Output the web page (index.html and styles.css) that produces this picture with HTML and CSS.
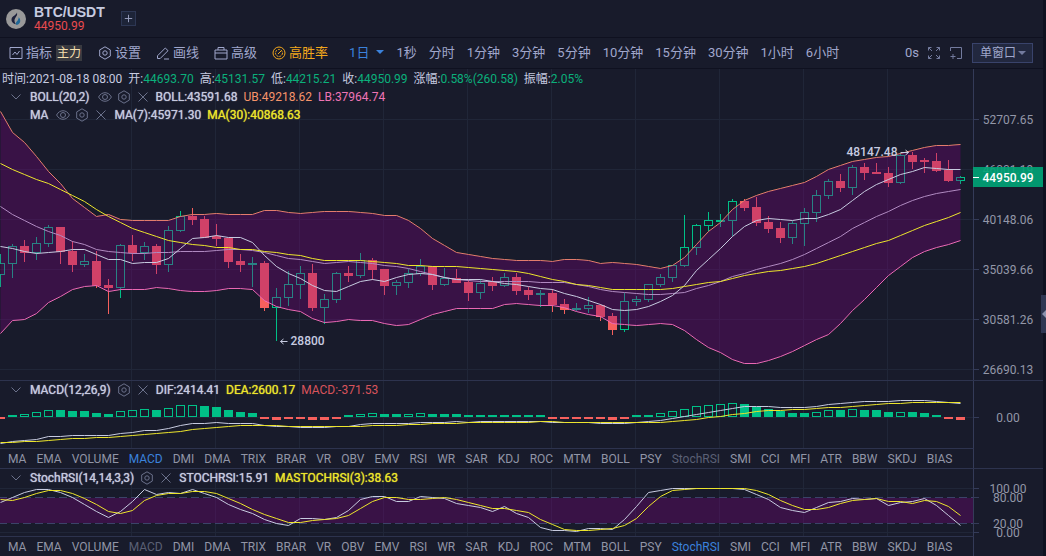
FILE: index.html
```html
<!DOCTYPE html>
<html lang="zh-CN">
<head>
    <meta charset="UTF-8" />
    <meta name="viewport" content="width=device-width, initial-scale=1" />
    <title>BTC/USDT 44950.99</title>
    <link rel="stylesheet" href="styles.css">
</head>
<body>
    <svg class="defs" width="0" height="0" aria-hidden="true">
        <symbol id="i-hex" viewBox="0 0 14 14">
            <path d="M7 .8l5.300 3.100v6.200L7 13.200l-5.300-3.100V3.900z" />
            <circle cx="7" cy="7" r="2.200" />
        </symbol>
        <symbol id="i-eye" viewBox="0 0 14 14">
            <path d="M.6 7C3.500 1.300 10.500 1.300 13.400 7 10.500 12.700 3.500 12.700.6 7z" />
            <circle cx="7" cy="7" r="2.500" />
        </symbol>
        <symbol id="i-close" viewBox="0 0 14 14"><path d="M2.500 2.500l9 9M11.500 2.500l-9 9" /></symbol>
        <symbol id="i-down" viewBox="0 0 14 14"><path d="M2.500 4.500l4.500 4.500 4.500-4.500" /></symbol>
    </svg>

    <div class="app">
        <header class="header">
            <svg class="logo" viewBox="0 0 20 20">
                <circle cx="10" cy="10" r="10" fill="#999" />
                <path d="M11 3.500c.5 2.500-.4 3.700-1.600 5.200-1.300 1.700-1.300 4.300.5 6.500-3-.5-4.800-2.700-4.300-5.500C6.200 6.900 10 6.500 11 3.500z" fill="#1b1f3a" />
                <path d="M12.600 8.200c2.300 1.900 2.800 6.300-2.100 7.900-1.500-2.300.4-3.500 1.300-4.800.7-1 .9-2 .8-3.100z" fill="#1f6796" />
            </svg>
            <div class="pair">
                <h1>BTC/USDT</h1>
                <span class="last">44950.99</span>
            </div>
            <button type="button" class="add" aria-label="添加"><svg viewBox="0 0 14 14"><path d="M7 3v8M3 7h8" /></svg></button>
        </header>

        <nav class="toolbar">
            <div class="tools">
                <button type="button" class="tool">
                    <svg viewBox="0 0 14 14"><path d="M1 1.500h12v11H1zM3.500 9l2.500-3 2 2.500L10.500 5" /></svg>指标 <span class="badge">主力</span>
                </button>
                <button type="button" class="tool"><svg viewBox="0 0 14 14"><use href="#i-hex" /></svg>设置</button>
                <button type="button" class="tool"><svg viewBox="0 0 14 14"><path d="M1.500 12.500V9.800L9.300 2l2.700 2.700-7.800 7.800zM8 13h5" /></svg>画线</button>
                <button type="button" class="tool"><svg viewBox="0 0 14 14"><path d="M1 4h12v9H1zM1 7h12M4 4V1.500h6V4" /></svg>高级</button>
                <button type="button" class="tool gold">
                    <svg viewBox="0 0 14 14"><circle cx="7" cy="7" r="6" /><circle cx="7" cy="7" r="3.500" stroke-dasharray="2 1" /><path d="M6 8l3.500-3.500" /></svg>高胜率
                </button>
            </div>
            <div class="intervals">
                <button type="button" class="on">1日<i class="caret"></i></button>
                <button type="button">1秒</button>
                <button type="button">分时</button>
                <button type="button">1分钟</button>
                <button type="button">3分钟</button>
                <button type="button">5分钟</button>
                <button type="button">10分钟</button>
                <button type="button">15分钟</button>
                <button type="button">30分钟</button>
                <button type="button">1小时</button>
                <button type="button">6小时</button>
            </div>
            <div class="right">
                <span class="delay">0s</span>
                <button type="button" aria-label="全屏"><svg viewBox="0 0 14 14"><path d="M1.500 4.500v-3h3M9.500 1.500h3v3M12.500 9.500v3h-3M4.500 12.500h-3v-3M1.500 1.500l3.500 3.500M12.500 1.500L9 5M12.500 12.500L9 9M1.500 12.500L5 9" /></svg></button>
                <button type="button" aria-label="添加窗口"><svg viewBox="0 0 14 14"><path d="M1.500 5V1.500h11v11H8M4 8v5M1.500 10.500h5" /></svg></button>
                <label class="layout">
                    <select aria-label="窗口布局"><option>单窗口</option><option>双窗口</option></select>
                    <i class="caret"></i>
                </label>
            </div>
        </nav>

        <main>
            <section class="panel main-panel">
                <svg class="plot" id="price"></svg>
                <div class="legends">
                    <div class="ohlc">
                        <span>时间:2021-08-18 08:00</span>
                        <span>开:<b>44693.70</b></span>
                        <span>高:<b>45131.57</b></span>
                        <span>低:<b>44215.21</b></span>
                        <span>收:<b>44950.99</b></span>
                        <span>涨幅:<b>0.58%(260.58)</b></span>
                        <span>振幅:<b>2.05%</b></span>
                    </div>
                    <div class="legend">
                        <svg class="fold"><use href="#i-down" /></svg>
                        <span class="strong">BOLL(20,2)</span>
                        <span class="icons wide"><svg><use href="#i-eye" /></svg><svg><use href="#i-hex" /></svg><svg><use href="#i-close" /></svg></span>
                        <span class="strong">BOLL:43591.68</span>
                        <span class="ub">UB:49218.62</span>
                        <span class="lb">LB:37964.74</span>
                    </div>
                    <div class="legend">
                        <span class="fold"></span>
                        <span class="strong">MA</span>
                        <span class="icons wide"><svg><use href="#i-eye" /></svg><svg><use href="#i-hex" /></svg><svg><use href="#i-close" /></svg></span>
                        <span class="strong">MA(7):45971.30</span>
                        <span class="strong yellow">MA(30):40868.63</span>
                    </div>
                </div>
            </section>

            <section class="panel">
                <svg class="plot sub" id="macd"></svg>
                <div class="legends">
                    <div class="legend">
                        <svg class="fold"><use href="#i-down" /></svg>
                        <span class="strong">MACD(12,26,9)</span>
                        <span class="icons"><svg><use href="#i-hex" /></svg><svg><use href="#i-close" /></svg></span>
                        <span class="strong">DIF:2414.41</span>
                        <span class="strong yellow">DEA:2600.17</span>
                        <span class="red">MACD:-371.53</span>
                    </div>
                </div>
            </section>
            <div class="tabs" data-on="MACD" data-off="StochRSI"></div>

            <section class="panel">
                <svg class="plot sub" id="stoch"></svg>
                <div class="legends">
                    <div class="legend">
                        <svg class="fold"><use href="#i-down" /></svg>
                        <span class="strong">StochRSI(14,14,3,3)</span>
                        <span class="icons"><svg><use href="#i-hex" /></svg><svg><use href="#i-close" /></svg></span>
                        <span class="strong">STOCHRSI:15.91</span>
                        <span class="strong yellow">MASTOCHRSI(3):38.63</span>
                    </div>
                </div>
            </section>
            <div class="tabs" data-on="StochRSI" data-off="MACD"></div>
        </main>
        <button type="button" class="drawer" aria-label="展开"></button>
    </div>

    <script src="chart.js"></script>
</body>
</html>
```

FILE: styles.css
```css
* {
    box-sizing: border-box;
}

body {
    margin: 0;
    background: #0f1220;
    color: #c7cbe0;
    font: 12px/18px Roboto, "Noto Sans CJK SC", sans-serif;
}

button, select {
    margin: 0;
    padding: 0;
    border: 0;
    background: none;
    color: inherit;
    font: inherit;
    cursor: pointer;
}

svg {
    fill: none;
    stroke: currentColor;
}

.defs {
    position: absolute;
}

.app {
    position: relative;
    margin-right: 3px;
    min-height: 100vh;
    background: #181b2b;
}

/* header */
.header {
    display: flex;
    align-items: center;
    height: 38px;
    padding-left: 6px;
    border-bottom: 1px solid #0f1120;
}

.logo {
    width: 20px;
    height: 20px;
    stroke: none;
}

.pair {
    margin: 0 16px 0 8px;
}

.pair h1 {
    margin: 0;
    font: bold 14px/14px "Liberation Sans", Arial, sans-serif;
}

.last {
    display: block;
    line-height: 14px;
    color: #ea4b50;
}

.add {
    width: 15px;
    height: 15px;
    border: 1px solid #2d3754;
    background: #1d2438;
    color: #9aa1c0;
}

.add svg {
    display: block;
    width: 13px;
    height: 13px;
}

/* toolbar */
.toolbar {
    display: flex;
    align-items: center;
    height: 31px;
    padding: 0 10px 0 9px;
    border-bottom: 1px solid #0f1120;
    color: #a0a7cc;
    font-size: 13px;
    white-space: nowrap;
}

.tools, .intervals, .right, .tool {
    display: flex;
    align-items: center;
}

.tools {
    gap: 15px;
}

.tool {
    gap: 3px;
}

.tool svg, .right svg {
    display: block;
    width: 14px;
    height: 14px;
}

.badge {
    margin: 0 1px;
    padding: 0 1px;
    background: #393a40;
    color: #f5dfae;
    font-size: 12px;
    line-height: 16px;
}

.gold {
    color: #f2a71c;
}

.intervals {
    gap: 12px;
    margin-left: 21px;
}

.on {
    color: #3b82dc;
}

.caret {
    display: inline-block;
    border: 4px solid transparent;
    border-top-color: currentColor;
    border-bottom: 0;
    vertical-align: 3px;
}

.on .caret {
    margin-left: 7px;
}

.right {
    gap: 8px;
    margin-left: auto;
}

.right button {
    color: #737b9e;
}

.layout {
    position: relative;
    margin-left: 1px;
    color: #a0a7cc;
}

.layout select {
    appearance: none;
    display: block;
    width: 61px;
    height: 20px;
    padding-left: 7px;
    border: 1px solid #39436b;
    background: #22283f;
    font-size: 12px;
}

.layout .caret {
    position: absolute;
    right: 7px;
    top: 8px;
    color: #737b9e;
    pointer-events: none;
}

/* chart panels */
.panel {
    position: relative;
    border-top: 1px solid #2d334e;
}

.main-panel {
    border-top: 0;
}

.plot {
    display: block;
    width: 100%;
    height: 311px;
    overflow: visible;
}

.sub {
    height: 67px;
}

.plot text {
    fill: #9397a8;
    stroke: none;
}

.plot .mark {
    fill: #c7cbe0;
    font-weight: 500;
}

.plot .now {
    fill: #fff;
    font-weight: 500;
}

.legends {
    position: absolute;
    left: 0;
    top: 0;
    white-space: nowrap;
}

.ohlc {
    display: flex;
    gap: 6px;
    padding: 1px 0 0 2px;
}

.ohlc b {
    color: #0bb07b;
    font-weight: 400;
}

.legend {
    display: flex;
    align-items: center;
    gap: 6px;
}

.strong {
    text-shadow: 0 0 1px currentColor;
}

.legend svg, .fold {
    width: 14px;
    height: 14px;
    color: #6b718b;
}

.legend .fold {
    margin: 0 1px 0 9px;
}

.icons {
    display: flex;
    gap: 5px;
}

.wide {
    padding-left: 2px;
}

.ub { color: #f7946a; }
.lb { color: #ef74b4; }
.red { color: #d8545b; }
.yellow { color: #ece52c; }

/* indicator tabs */
.tabs {
    display: flex;
    gap: 10px;
    height: 20px;
    margin-right: 69px;
    padding: 1px 0 0 8px;
    border-top: 1px solid #2d334e;
    border-right: 1px solid #343b58;
    color: #9195a6;
    white-space: nowrap;
}

.tabs .off {
    color: #5b6075;
}

.tabs .on {
    color: #3b82dc;
}

.drawer {
    position: absolute;
    right: -3px;
    top: 295px;
    width: 5px;
    height: 38px;
    background: #2f3753;
}

.drawer::before {
    content: "";
    position: absolute;
    right: 0;
    top: 15px;
    border: 4px solid transparent;
    border-right-color: #8a91ad;
    border-left: 0;
}
```

FILE: chart.js
```js
const AXIS = 70;
const STEP = 12;
const UP = "#00c087";
const DOWN = "#f6605d";
const BAND = "rgba(126,0,128,.32)";
const GRID = "#202638";
const AXIS_LINE = "#343b58";

// kind, body top, body bottom, high, low
const candles = `
g 263 275 254 287|g 246 264 244 278|r 246 253 240 262|g 243 253 237 260|g 227 244 225 247|r 227 252 227 264
r 251 265 241 272|g 261 265 254 267|r 261 286 251 288|r 285 288 279 314|g 245 288 244 298|r 245 253 235 261
g 246 253 242 260|r 246 265 244 274|g 230 265 226 272|g 216 231 211 232|r 216 220 208 225|r 219 238 216 238
r 236 239 224 246|r 238 262 238 268|r 261 265 254 272|g 263 265 257 287|r 263 308 261 311|g 297 308 288 341
g 284 298 271 306|g 273 285 266 299|r 273 308 264 311|g 299 308 294 324|g 273 300 272 303|r 273 276 266 282
g 260 276 253 278|r 260 270 258 280|r 269 286 269 295|g 282 286 280 295|g 273 283 269 288|g 266 274 259 276
r 266 285 266 290|g 278 285 268 286|r 278 283 269 283|r 282 293 280 301|g 283 293 279 299|r 282 286 277 291
g 277 286 273 287|r 277 291 273 295|r 290 295 287 300|g 293 295 290 307|r 293 305 289 312|r 304 310 299 314
g 308 310 303 311|g 305 309 297 313|r 305 317 304 321|r 316 330 313 335|g 301 330 293 332|g 299 302 296 306
g 284 300 284 302|g 277 285 274 287|g 265 278 265 282|g 247 266 215 267|g 225 248 224 255|g 220 226 212 231
g 220 222 214 227|g 201 221 199 236|r 201 208 199 211|r 207 223 197 226|r 222 229 216 233|r 228 238 222 243
g 223 238 221 244|g 212 224 208 246|g 195 213 190 222|g 181 196 179 199|r 181 188 174 192|g 167 188 165 195
r 167 173 163 180|r 172 174 163 174|r 173 183 167 187|g 155 183 153 184|r 155 162 152 169|r 160 162 158 173
r 161 171 153 172|r 170 181 160 182|g 177 181 176 184`.trim().split(/[|\n]/).map(s => s.split(" "));

const upper = [111,132,142,156,171,183,198,207,216,214,219,220,220,220,220,216,214,214,213,214,214,214,210,210,212,213,212,211,211,211,212,213,215,215,220,228,238,245,252,254,256,258,259,260,260,260,261,259,259,260,263,262,263,264,266,268,265,257,244,231,222,209,200,195,191,188,185,182,176,169,165,161,159,157,156,153,150,147,145,145,144];
const lower = [333,320,319,313,302,296,289,286,285,291,289,289,289,287,288,290,291,291,290,288,288,289,300,306,309,311,318,322,321,319,320,320,323,325,324,319,314,311,308,308,308,308,304,303,304,305,305,307,311,314,316,323,324,325,324,323,324,330,339,347,352,359,363,363,360,356,351,345,339,334,323,310,299,287,275,266,257,251,247,244,240];
const boll = [206,214,220,226,231,235,241,244,249,251,252,253,253,252,252,251,251,251,250,249,249,250,252,255,258,259,261,263,262,261,262,263,265,266,268,271,274,277,279,280,281,281,281,281,281,282,282,282,284,286,289,291,292,293,294,294,293,292,288,285,281,276,273,269,266,263,259,254,248,242,236,228,222,216,211,205,200,196,193,191,189];
const ma30 = [163,169,174,179,183,189,195,201,209,216,222,228,232,236,240,242,244,245,247,247,249,249,251,252,254,255,258,260,260,260,260,261,262,263,265,265,266,266,266,267,268,269,270,271,273,276,279,281,284,285,287,289,289,289,289,289,288,286,284,282,281,278,275,273,271,270,268,266,263,259,255,251,247,243,240,235,230,225,221,217,212];
const ma7 = [246,248,251,253,252,251,249,249,254,259,259,263,262,262,258,248,238,237,235,237,237,242,255,266,273,278,285,290,291,286,281,279,281,277,274,273,274,277,279,279,279,281,283,284,286,288,289,293,296,300,304,309,310,309,306,301,295,285,270,259,248,236,226,220,218,219,220,218,218,214,209,200,191,184,179,174,171,167,168,169,169];

// h = hollow bar, f = filled bar, r = below zero
const bars = "r2 f2 h3 h5 h7 f7 f6 f6 f4 f3 h6 h7 h8 f7 h9 h12 h12 f11 f10 f7 f5 f4 r2 r3 r2 r2 r3 r3 r2 f2 h3 h4 f3 f3 h3 h4 f3 f3 f3 f2 f2 f2 f2 f2 f2 f2 r2 r2 r2 r2 r2 r3 r2 f2 f2 h4 h6 h8 h11 h12 h13 h14 f13 f10 f8 f6 f4 f4 h5 h7 f7 h8 f7 f7 f5 h5 f5 f4 f2 r2 r3".split(" ");
const dif = [443,441,440,439,436,436,435,435,435,435,433,432,430,430,428,425,423,423,422,423,423,423,425,426,426,427,427,427,426,426,424,423,423,423,423,422,422,422,421,422,421,421,421,421,421,421,422,422,422,422,423,423,423,422,421,420,418,416,414,412,410,408,406,406,406,407,407,407,406,404,403,402,401,401,401,400,400,400,401,402,403];
const dea = [442,442,441,441,440,439,438,438,437,437,436,435,434,433,432,431,429,428,427,426,425,425,425,425,426,426,426,426,426,426,426,425,425,425,424,424,423,423,423,422,422,422,422,422,422,421,421,422,422,422,422,422,422,422,422,422,421,420,419,417,416,414,413,411,410,410,409,409,408,407,407,406,405,404,403,403,402,402,402,402,402];

const stochK = [502,497,492,489,489,492,497,504,511,517,511,501,489,494,492,493,489,493,497,504,509,513,519,523,525,518,518,519,517,510,499,496,496,501,501,496,497,498,503,505,507,511,506,513,517,527,530,530,531,528,528,529,519,506,492,490,488,488,488,488,488,488,489,494,499,507,510,512,507,502,501,498,499,498,505,502,501,498,505,515,525];
const stochD = [499,500,497,493,490,490,493,498,504,511,513,510,500,495,493,493,491,491,493,498,503,509,514,518,522,522,520,519,518,515,508,501,497,497,499,499,498,497,499,502,505,508,508,510,512,519,524,529,530,530,529,528,525,518,506,496,490,489,488,488,488,488,488,490,494,500,505,509,509,507,503,500,499,498,501,501,503,500,501,506,515];

const tabNames = "MA EMA VOLUME MACD DMI DMA TRIX BRAR VR OBV EMV RSI WR SAR KDJ ROC MTM BOLL PSY StochRSI SMI CCI MFI ATR BBW SKDJ BIAS".split(" ");

let plotW;
// the newest candle stays at the right edge
const x = i => plotW - 12.5 - (80 - i) * STEP;
const seg = (x1, y1, x2, y2, color, extra = "") => `<path d="M${x1} ${y1}L${x2} ${y2}" stroke="${color}" ${extra}/>`;
const points = ys => ys.map((y, i) => `${x(i)},${y + 0.5}`);
const line = (ys, color) => `<polyline points="${points(ys).join(" ")}" stroke="${color}"/>`;

function frame(top, height, ticks) {
    let s = "";
    for (let gx = plotW - 85.5; gx > 100; gx -= 84) s += seg(gx, top, gx, top + height, GRID);
    for (const [y, label, nogrid] of ticks) {
        if (!nogrid) s += seg(0, y + 0.5, plotW, y + 0.5, GRID);
        s += seg(plotW, y + 0.5, plotW + 6, y + 0.5, AXIS_LINE);
        s += `<text x="${plotW + 35}" y="${y + 5}" text-anchor="middle">${label}</text>`;
    }
    return s + seg(plotW + 0.5, top, plotW + 0.5, top + height, AXIS_LINE);
}

function draw(id, top, height, body) {
    const svg = document.getElementById(id);
    plotW = svg.clientWidth - AXIS;
    svg.setAttribute("viewBox", `0 ${top} ${svg.clientWidth} ${height}`);
    svg.innerHTML = body(top, height);
}

function price(top, height) {
    let s = frame(top, height, [[119, "52707.65"], [169, "46001.19"], [219, "40148.06"], [269, "35039.66"], [319, "30581.26"], [369, "26690.13"]]);
    candles.forEach(([kind, t, b, hi, lo], i) => {
        const cx = x(i);
        if (kind === "r") {
            s += seg(cx, hi, cx, lo, DOWN);
            s += `<rect x="${cx - 4.5}" y="${t}" width="9" height="${b - t}" fill="${DOWN}" stroke="none"/>`;
        } else {
            s += seg(cx, hi, cx, t, UP) + seg(cx, b, cx, lo, UP);
            s += `<rect x="${cx - 4}" y="${+t + 0.5}" width="8" height="${b - t - 1}" stroke="${UP}"/>`;
        }
    });
    s += line(upper, "#f7946a") + line(boll, "#c7cbe0") + line(lower, "#ff7dbf");
    s += `<polygon points="${points(upper).concat(points(lower).reverse()).join(" ")}" fill="${BAND}" stroke="none"/>`;
    s += line(ma7, "#c7cbe0") + line(ma30, "#ece52c");

    const hx = x(76), lx = x(23);
    s += `<text class="mark" x="${hx - 15}" y="156" text-anchor="end">48147.48</text><path d="M${hx - 12} 152.500h8m-3-2.500l3 2.500-3 2.500" stroke="#c7cbe0"/>`;
    s += `<text class="mark" x="${lx + 14}" y="345">28800</text><path d="M${lx + 11} 341.500h-7m3-2.500l-3 2.500 3 2.500" stroke="#c7cbe0"/>`;
    s += `<rect x="${plotW}" y="167" width="70" height="20" fill="#00a577" fill-opacity=".9" stroke="none"/>`;
    s += seg(plotW, 177.5, plotW + 6, 177.5, "#fff");
    return s + `<text class="now" x="${plotW + 35}" y="182" text-anchor="middle">44950.99</text>`;
}

function macd(top, height) {
    let s = frame(top, height, [[417, "0.00"]]);
    bars.forEach((bar, i) => {
        const h = +bar.slice(1), left = x(i) - 4.5;
        if (bar[0] === "h") s += `<rect x="${left + 0.5}" y="${417.5 - h}" width="8" height="${h - 1}" stroke="${UP}"/>`;
        else if (bar[0] === "f") s += `<rect x="${left}" y="${417 - h}" width="9" height="${h}" fill="${UP}" stroke="none"/>`;
        else s += `<rect x="${left}" y="417" width="9" height="${h}" fill="${DOWN}" stroke="none"/>`;
    });
    return s + line(dif, "#c7cbe0") + line(dea, "#ece52c");
}

function stoch(top, height) {
    let s = frame(top, height, [[488, "100.00"], [497, "80.00", true], [523, "20.00", true], [532, "0.00"]]);
    s += `<rect x="0" y="498" width="${plotW}" height="25" fill="${BAND}" stroke="none"/>`;
    for (const y of [497.5, 523.5]) s += seg(0, y, plotW, y, "#3b4368", 'stroke-dasharray="8 4" stroke-dashoffset="1"');
    return s + line(stochK, "#c7cbe0") + line(stochD, "#ece52c");
}

function render() {
    draw("price", 69, 311, price);
    draw("macd", 381, 67, macd);
    draw("stoch", 469, 67, stoch);
}

document.querySelectorAll(".tabs").forEach(el => {
    el.innerHTML = tabNames.map(n => {
        const cls = n === el.dataset.on ? "on" : n === el.dataset.off ? "off" : "";
        return `<button type="button" class="${cls}">${n}</button>`;
    }).join("");
});

render();
window.addEventListener("resize", render);
```
